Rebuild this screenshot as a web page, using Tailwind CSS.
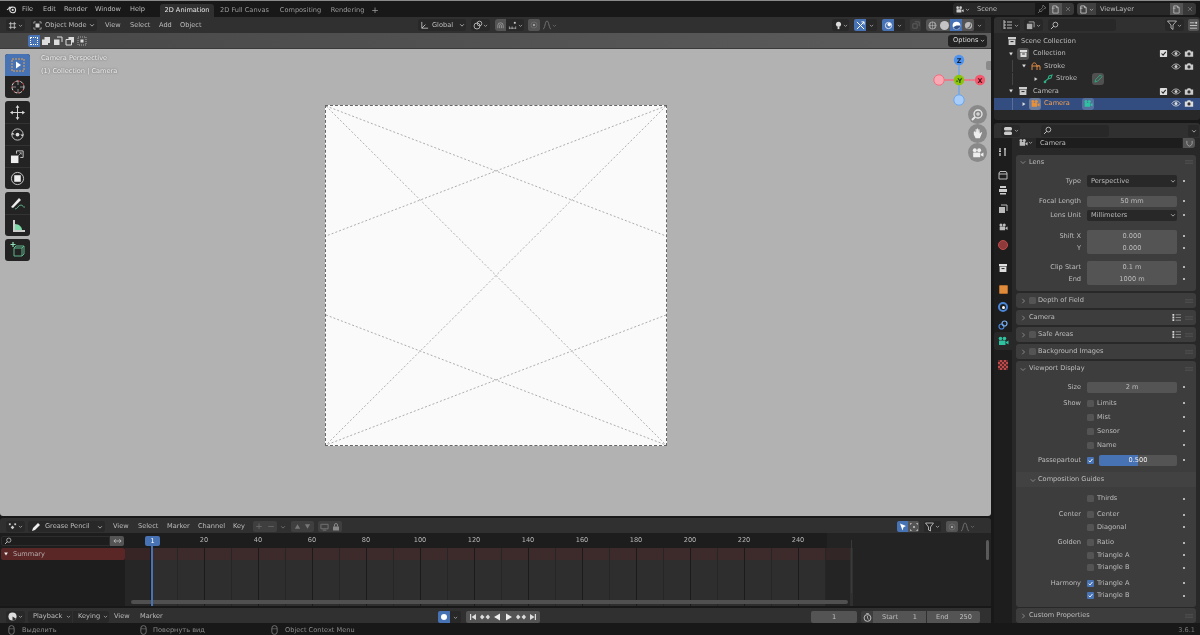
<!DOCTYPE html>
<html><head><meta charset="utf-8"><script src="https://cdn.jsdelivr.net/npm/@tailwindcss/browser@4"></script></head>
<body class="m-0 overflow-hidden bg-[#181818]">
<svg width="0" height="0" class="absolute">
<defs>
<symbol id="ch" viewBox="0 0 8 8"><path d="M1.5 3l2.5 2.5L6.5 3" fill="none" stroke="currentColor" stroke-width="1.1"/></symbol>
<symbol id="cr" viewBox="0 0 8 8"><path d="M3 1l3 3-3 3" fill="none" stroke="currentColor" stroke-width="0.9"/></symbol>
<symbol id="cd" viewBox="0 0 8 8"><path d="M1 3l3 3 3-3" fill="none" stroke="currentColor" stroke-width="0.9"/></symbol>
<symbol id="td" viewBox="0 0 8 8"><path d="M1.5 2h5L4 6z" fill="currentColor"/></symbol>
<symbol id="tr" viewBox="0 0 8 8"><path d="M2 1.5v5L6 4z" fill="currentColor"/></symbol>
<symbol id="eye" viewBox="0 0 12 10"><path d="M1 5c2.5-4 7.500-4 10 0-2.500 4-7.500 4-10 0z" fill="none" stroke="currentColor" stroke-width="1"/><circle cx="6" cy="5" r="1.800" fill="currentColor"/></symbol>
<symbol id="rcam" viewBox="0 0 12 10"><path d="M1 2.500h2.500l1-1.500h3l1 1.500H11V9H1z" fill="currentColor"/><circle cx="6" cy="5.500" r="1.900" fill="#333"/></symbol>
<symbol id="chk" viewBox="0 0 10 10"><rect x="1" y="1" width="8" height="8" rx="1" fill="currentColor"/><path d="M2.800 5l1.700 1.800 3-3.600" fill="none" stroke="#282828" stroke-width="1.200"/></symbol>
<symbol id="bchk" viewBox="0 0 10 10"><rect width="10" height="10" rx="1.500" fill="#4772b3"/><path d="M2.300 5.200l2 2 3.500-4.400" fill="none" stroke="#fff" stroke-width="1.300"/></symbol>
<symbol id="new" viewBox="0 0 10 10"><path d="M2 1h4l2 2v6H2zM4 3.500H1M6 1v2h2" fill="none" stroke="currentColor" stroke-width="0.900"/></symbol>
<symbol id="x" viewBox="0 0 10 10"><path d="M2.500 2.500l5 5M7.500 2.500l-5 5" stroke="currentColor" stroke-width="1"/></symbol>
<symbol id="sr" viewBox="0 0 12 12"><circle cx="7.200" cy="4.800" r="3.200" fill="none" stroke="currentColor" stroke-width="1.100"/><path d="M5 7l-3.500 3.500" stroke="currentColor" stroke-width="1.300"/></symbol>
<symbol id="box" viewBox="0 0 10 10"><path d="M1 1h8v2.200H1zM1.600 3.800h6.800V9H1.600z" fill="currentColor"/><rect x="3.500" y="5" width="3" height="1.100" fill="#333"/></symbol>
<symbol id="cam" viewBox="0 0 12 10"><circle cx="3.500" cy="2.500" r="1.800" fill="currentColor"/><circle cx="7.500" cy="2.500" r="1.800" fill="currentColor"/><rect x="2" y="4.500" width="6.500" height="4.500" rx="0.500" fill="currentColor"/><path d="M9 6l2.500-1.500v4L9 7z" fill="currentColor"/></symbol>
<symbol id="mouse" viewBox="0 0 8 12"><rect x="0.800" y="0.800" width="6.400" height="10.400" rx="3" fill="none" stroke="currentColor" stroke-width="0.900"/><path d="M1 4.500h6" stroke="currentColor" stroke-width="0.600"/></symbol>
<symbol id="list" viewBox="0 0 10 10"><path d="M.5 1h2v2h-2zM.5 4h2v2h-2zM.5 7h2v2h-2z" fill="#ddd"/><path d="M4 2h6M4 5h6M4 8h6" stroke="#aaa" stroke-width="0.800"/></symbol>
<symbol id="grip" viewBox="0 0 8 4"><path d="M0 .5h8M0 2h8M0 3.500h8" stroke="#555" stroke-width="0.600"/></symbol>
</defs></svg>
<div class="relative w-[1200px] h-[635px] overflow-hidden flex flex-col bg-[#181818] text-[#bdbdbd] text-[6.600px] leading-none font-['DejaVu_Sans',sans-serif] blur-[0.35px]">

<!-- top bar -->
<div class="h-[17px] flex items-end shrink-0 bg-[#181818] border-t border-[#8a8a8a]">
  <div class="flex items-center h-[16px] w-[160px]">
    <div class="w-[22px] flex justify-center"><svg class="w-[11px] h-[10px]" viewBox="0 0 12 11"><path d="M1 6.500L5 3.800 3 3.700h4" fill="none" stroke="#ddd" stroke-width="1.200"/><circle cx="7.300" cy="6.500" r="3.200" fill="none" stroke="#ddd" stroke-width="1.200"/><circle cx="7.300" cy="6.500" r="1.200" fill="#ddd"/></svg></div>
    <span class="w-[21px]">File</span><span class="w-[21px]">Edit</span><span class="w-[31px]">Render</span><span class="w-[35px]">Window</span><span class="w-[30px]">Help</span>
  </div>
  <div class="w-[54px] h-[13px] bg-[#303030] rounded-t-[3px] flex items-center justify-center text-[#e6e6e6]">2D Animation</div>
  <div class="w-[61px] h-[13px] flex items-center justify-center text-[#9a9a9a]">2D Full Canvas</div>
  <div class="w-[51px] h-[13px] flex items-center justify-center text-[#9a9a9a]">Compositing</div>
  <div class="w-[43px] h-[13px] flex items-center justify-center text-[#9a9a9a]">Rendering</div>
  <div class="w-[12px] h-[13px] flex items-center justify-center text-[#9a9a9a] text-[9px]">+</div>
  <div class="w-[693px] pl-[572px] h-[16px] flex items-center">
    <div class="w-[19px] h-[12px] rounded-l-[3px] bg-[#282828] flex items-center justify-center gap-[1px]"><svg class="w-[9px] h-[9px] text-[#ccc]"><use href="#cam"/></svg><svg class="w-[5px] h-[5px]"><use href="#ch"/></svg></div>
    <div class="w-[63px] h-[12px] bg-[#282828] flex items-center pl-[5px]">Scene</div>
    <svg class="ml-[2px] w-[10px] h-[10px] text-[#777]" viewBox="0 0 10 10"><path d="M6 1l3 3-2 .5-2 2L4 8 2 6l1.500-.5 2-2zM3 7L1 9" fill="none" stroke="currentColor" stroke-width="0.800"/></svg>
    <div class="ml-[2px] w-[13px] h-[12px] bg-[#545454] flex items-center justify-center"><svg class="w-[9px] h-[9px]"><use href="#new"/></svg></div>
    <div class="w-[12px] h-[12px] bg-[#383838] rounded-r-[3px] flex items-center justify-center text-[#777]"><svg class="w-[8px] h-[8px]"><use href="#x"/></svg></div>
  </div>
  <div class="h-[16px] flex items-center ml-[3px]">
    <div class="w-[19px] h-[12px] rounded-l-[3px] bg-[#404040] flex items-center justify-center gap-[1px]"><svg class="w-[9px] h-[9px] text-[#ccc]"><use href="#new"/></svg><svg class="w-[5px] h-[5px]"><use href="#ch"/></svg></div>
    <div class="w-[74px] h-[12px] bg-[#282828] flex items-center pl-[4px]">ViewLayer</div>
    <div class="w-[13px] h-[12px] bg-[#545454] flex items-center justify-center"><svg class="w-[9px] h-[9px]"><use href="#new"/></svg></div>
    <div class="w-[13px] h-[12px] bg-[#383838] rounded-r-[3px] flex items-center justify-center text-[#777]"><svg class="w-[8px] h-[8px]"><use href="#x"/></svg></div>
  </div>
</div>

<div class="flex-1 flex min-h-0">
<!-- left column -->
<div class="w-[991px] flex flex-col shrink-0">
  <!-- viewport header -->
  <div class="h-[16px] bg-[#303030] flex items-center shrink-0 relative">
    <div class="ml-[6px] w-[19px] h-[12px] bg-[#282828] rounded-[3px] flex items-center justify-center gap-[1px]"><svg class="w-[9px] h-[9px]" viewBox="0 0 10 10"><path d="M3 1v8M7 1v8M1 3h8M1 7h8" stroke="#ccc" stroke-width="0.900"/></svg><svg class="w-[5px] h-[5px]"><use href="#ch"/></svg></div>
    <div class="ml-[6px] w-[66px] h-[12px] bg-[#282828] rounded-[3px] flex items-center pl-[2px]"><svg class="w-[9px] h-[9px]" viewBox="0 0 10 10"><path d="M1 3V1h2M7 1h2v2M9 7v2H7M3 9H1V7" fill="none" stroke="#ccc" stroke-width="0.800"/><rect x="2.800" y="2.800" width="4.400" height="4.400" fill="#ccc"/></svg><span class="ml-[3px]">Object Mode</span><svg class="ml-auto mr-[2px] w-[6px] h-[6px]"><use href="#ch"/></svg></div>
    <span class="ml-[8px] w-[25px]">View</span><span class="w-[29px]">Select</span><span class="w-[21px]">Add</span><span>Object</span>
    <div class="absolute left-[418px] top-[2px] flex items-center h-[12px]">
      <div class="w-[48px] h-[12px] bg-[#282828] rounded-[3px] flex items-center pl-[2px]"><svg class="w-[9px] h-[9px]" viewBox="0 0 10 10"><path d="M2 1v7h7M2 8l4-4" fill="none" stroke="#ccc" stroke-width="0.900"/></svg><span class="ml-[3px]">Global</span><svg class="ml-auto mr-[1px] w-[6px] h-[6px]"><use href="#ch"/></svg></div>
      <div class="ml-[5px] w-[19px] h-[12px] bg-[#282828] rounded-[3px] flex items-center justify-center"><svg class="w-[10px] h-[10px]" viewBox="0 0 10 10"><circle cx="4" cy="6" r="3" fill="none" stroke="#ccc" stroke-width="0.800"/><circle cx="6.500" cy="3.500" r="2.300" fill="none" stroke="#ccc" stroke-width="0.800"/></svg><svg class="w-[5px] h-[5px]"><use href="#ch"/></svg></div>
      <div class="ml-[5px] w-[11px] h-[12px] bg-[#545454] rounded-l-[3px] flex items-center justify-center"><svg class="w-[9px] h-[9px]" viewBox="0 0 10 10"><path d="M2 8V5a3 3 0 016 0v3M4 8V5a1 1 0 012 0v3" fill="none" stroke="#aaa" stroke-width="0.800"/></svg></div>
      <div class="w-[18px] h-[12px] bg-[#282828] rounded-r-[3px] flex items-center justify-center"><svg class="w-[10px] h-[9px]" viewBox="0 0 10 10"><path d="M1 6v3M1 8h7M4 6v3M8 6v3" stroke="#ccc" stroke-width="0.700"/><rect x="6" y="1" width="2" height="2" fill="#ccc"/></svg><svg class="w-[5px] h-[5px]"><use href="#ch"/></svg></div>
      <div class="ml-[4px] w-[12px] h-[12px] bg-[#545454] rounded-[2px] flex items-center justify-center"><svg class="w-[8px] h-[8px]" viewBox="0 0 10 10"><circle cx="5" cy="5" r="3.800" fill="none" stroke="#777" stroke-width="0.800"/><circle cx="5" cy="5" r="1.200" fill="#bbb"/></svg></div>
      <div class="ml-[2px] w-[19px] flex items-center text-[#777]"><svg class="w-[10px] h-[10px]" viewBox="0 0 10 10"><path d="M1 9c2 0 2-8 4-8s2 8 4 8" fill="none" stroke="currentColor" stroke-width="0.900"/></svg><svg class="w-[5px] h-[5px]"><use href="#ch"/></svg></div>
    </div>
    <div class="absolute left-[832px] top-[2px] flex items-center h-[12px]">
      <div class="w-[17px] h-[12px] bg-[#282828] rounded-[3px] flex items-center justify-center"><svg class="w-[9px] h-[9px]" viewBox="0 0 10 10"><circle cx="5" cy="3.500" r="2.800" fill="#ddd"/><path d="M4 6h2v3H4z" fill="#ddd"/></svg><svg class="w-[5px] h-[5px]"><use href="#ch"/></svg></div>
      <div class="ml-[5px] w-[12px] h-[12px] bg-[#4772b3] rounded-l-[2px] flex items-center justify-center"><svg class="w-[9px] h-[9px]" viewBox="0 0 10 10"><path d="M1 1l8 8M1 9l8-8M6 1h3v3" fill="none" stroke="#fff" stroke-width="1.100"/></svg></div>
      <div class="w-[11px] h-[12px] bg-[#282828] rounded-r-[2px] flex items-center justify-center"><svg class="w-[5px] h-[5px]"><use href="#ch"/></svg></div>
      <div class="ml-[5px] w-[12px] h-[12px] bg-[#4772b3] rounded-l-[2px] flex items-center justify-center"><svg class="w-[9px] h-[9px]" viewBox="0 0 10 10"><circle cx="5" cy="5" r="3.500" fill="none" stroke="#fff" stroke-width="0.900"/><circle cx="5.800" cy="4" r="2" fill="#fff"/></svg></div>
      <div class="w-[11px] h-[12px] bg-[#282828] rounded-r-[2px] flex items-center justify-center"><svg class="w-[5px] h-[5px]"><use href="#ch"/></svg></div>
      <div class="ml-[5px] w-[11px] h-[12px] bg-[#3a3a3a] rounded-[2px] flex items-center justify-center"><svg class="w-[8px] h-[8px]" viewBox="0 0 10 10"><path d="M1 3.500h5.500V9H1zM3.500 1H9v5.500" fill="none" stroke="#666" stroke-width="1"/></svg></div>
      <div class="ml-[5px] w-[12px] h-[12px] bg-[#545454] rounded-l-[3px] flex items-center justify-center"><svg class="w-[9px] h-[9px]" viewBox="0 0 10 10"><circle cx="5" cy="5" r="4" fill="none" stroke="#ccc" stroke-width="0.700"/><path d="M1 5h8M5 1v8M3 2c-1 2-1 4 0 6M7 2c1 2 1 4 0 6" fill="none" stroke="#ccc" stroke-width="0.500"/></svg></div>
      <div class="w-[12px] h-[12px] bg-[#545454] flex items-center justify-center"><span class="w-[9px] h-[9px] rounded-full bg-[#c4c4c4]"></span></div>
      <div class="w-[12px] h-[12px] bg-[#4772b3] flex items-center justify-center"><svg class="w-[9px] h-[9px]" viewBox="0 0 10 10"><circle cx="5" cy="5" r="4.300" fill="#fff"/><path d="M5 5h4.300a4.300 4.300 0 01-8 2z" fill="#33528a"/></svg></div>
      <div class="w-[12px] h-[12px] bg-[#545454] rounded-r-[2px] flex items-center justify-center"><svg class="w-[9px] h-[9px]" viewBox="0 0 10 10"><circle cx="5" cy="5" r="4" fill="#bbb"/><path d="M7 1.800A4 4 0 012.500 8 5 5 0 007 1.800z" fill="#555"/></svg></div>
      <div class="w-[11px] h-[12px] bg-[#282828] rounded-r-[2px] flex items-center justify-center"><svg class="w-[5px] h-[5px]"><use href="#ch"/></svg></div>
    </div>
  </div>
  <!-- tool settings -->
  <div class="h-[16px] bg-[linear-gradient(90deg,#484848,#5c5c5c)] flex items-center shrink-0 border-b border-[#3a3a3a]">
    <div class="ml-[28px] flex h-[12px] bg-[#4a4a4a] rounded-[2px]">
      <div class="w-[12px] bg-[#4772b3] rounded-l-[2px] flex items-center justify-center"><span class="w-[8px] h-[8px] border border-dotted border-white"></span></div>
      <div class="w-[12px] flex items-center justify-center"><svg class="w-[10px] h-[10px]" viewBox="0 0 10 10"><path d="M1 3.500h6V9H1z M3.500 1H9v6H7V3.500H3.500z" fill="#ddd"/></svg></div>
      <div class="w-[12px] flex items-center justify-center"><svg class="w-[10px] h-[10px]" viewBox="0 0 10 10"><path d="M1 3.500h5.500V9H1z" fill="#ddd"/><path d="M4 1h5v5" fill="none" stroke="#ddd"/></svg></div>
      <div class="w-[12px] flex items-center justify-center"><svg class="w-[10px] h-[10px]" viewBox="0 0 10 10"><path d="M1 3.500h5.500V9H1z" fill="none" stroke="#ddd"/><path d="M3.500 1H9v5.500H6.500v-3h-3z" fill="#ddd"/></svg></div>
      <div class="w-[12px] flex items-center justify-center"><svg class="w-[10px] h-[10px]" viewBox="0 0 10 10"><rect x="1" y="1" width="8" height="8" fill="none" stroke="#aaa" stroke-dasharray="1 1"/><rect x="3.500" y="3.500" width="3" height="3" fill="#ddd"/></svg></div>
    </div>
    <div class="ml-auto mr-[4px] w-[39px] h-[12px] bg-[#232323] rounded-[3px] flex items-center justify-between pl-[5px] pr-[2px] text-[#ddd]">Options<svg class="w-[5px] h-[5px]"><use href="#ch"/></svg></div>
  </div>
  <!-- viewport -->
  <div class="relative flex-1 bg-[#b2b2b2] min-h-0 rounded-b-[3px]">
    <div class="ml-[325px] mt-[56px] w-[342px] h-[341px] bg-[#fafafa] border border-dashed border-[#666]">
      <svg class="w-full h-full" viewBox="0 0 340 339" fill="none" stroke="#999" stroke-width="0.800" stroke-dasharray="2 2"><path d="M0 0L340 339M340 0L0 339M0 0L340 130M340 0L0 130M0 209L340 339M340 209L0 339"/></svg>
    </div>
    <div class="absolute left-[41px] top-[6px] flex flex-col gap-[6px] text-[#eeeeee] [text-shadow:0_0_2px_#555]"><span>Camera Perspective</span><span>(1) Collection | Camera</span></div>
    <!-- toolbar -->
    <div class="absolute left-[5px] top-[5px] w-[25px] flex flex-col gap-[3px]">
      <div class="bg-[#232323] rounded-[3px] overflow-hidden">
        <div class="h-[22px] bg-[#4772b3] flex items-center justify-center"><svg class="w-[16px] h-[16px]" viewBox="0 0 16 16"><rect x="2" y="2" width="12" height="12" fill="none" stroke="#e9a34e" stroke-width="1" stroke-dasharray="2 1"/><path d="M6 4.500v7l5-3.500z" fill="#fff"/></svg></div>
        <div class="h-[22px] flex items-center justify-center"><svg class="w-[16px] h-[16px]" viewBox="0 0 16 16"><circle cx="8" cy="8" r="6" fill="none" stroke="#ddd" stroke-width="1" stroke-dasharray="3 2"/><circle cx="8" cy="8" r="6" fill="none" stroke="#d04040" stroke-width="1" stroke-dasharray="2 3" stroke-dashoffset="2.500"/><path d="M8 2v4M8 10v4M2 8h4M10 8h4" stroke="#bbb" stroke-width="0.700"/></svg></div>
      </div>
      <div class="bg-[#232323] rounded-[3px] overflow-hidden">
        <div class="h-[22px] flex items-center justify-center"><svg class="w-[15px] h-[15px]" viewBox="0 0 16 16"><path d="M8 1v14M1 8h14" stroke="#ddd"/><path d="M8 0l2 3H6zM8 16l-2-3h4zM0 8l3-2v4zM16 8l-3 2V6z" fill="#ddd"/></svg></div>
        <div class="h-[22px] flex items-center justify-center border-t border-[#333]"><svg class="w-[15px] h-[15px]" viewBox="0 0 16 16"><circle cx="8" cy="8" r="6" fill="none" stroke="#ccc"/><circle cx="8" cy="8" r="2" fill="#ddd"/><path d="M1 8l2-2 2 2zM15 8l-2 2-2-2z" fill="#ddd"/></svg></div>
        <div class="h-[22px] flex items-center justify-center border-t border-[#333]"><svg class="w-[15px] h-[15px]" viewBox="0 0 16 16"><rect x="1" y="7" width="8" height="8" fill="#eee"/><path d="M7 5V2h7v7h-3" fill="none" stroke="#ccc"/><path d="M9 7l3-3M12 4v2M12 4h-2" stroke="#ccc" stroke-width="0.700"/></svg></div>
        <div class="h-[22px] flex items-center justify-center border-t border-[#333]"><svg class="w-[15px] h-[15px]" viewBox="0 0 16 16"><circle cx="8" cy="8" r="6.500" fill="none" stroke="#ccc"/><rect x="4.500" y="4.500" width="7" height="7" fill="#eee"/></svg></div>
      </div>
      <div class="bg-[#232323] rounded-[3px] overflow-hidden">
        <div class="h-[22px] flex items-center justify-center"><svg class="w-[16px] h-[16px]" viewBox="0 0 16 16"><path d="M1 12L9 3l2 2-8 8z" fill="#eee"/><path d="M5 14c3 0 3-4 6-4s1 3 4 2" fill="none" stroke="#5fb58c" stroke-width="0.900"/></svg></div>
        <div class="h-[22px] flex items-center justify-center border-t border-[#333]"><svg class="w-[16px] h-[16px]" viewBox="0 0 16 16"><path d="M3 14V2l2 0v10h10v2z" fill="#ccc"/><path d="M5 12V6c4 0 7 3 7 6z" fill="#7fd8a8"/></svg></div>
      </div>
      <div class="bg-[#232323] rounded-[3px]">
        <div class="h-[22px] flex items-center justify-center"><svg class="w-[16px] h-[16px]" viewBox="0 0 16 16"><path d="M4 6h8v8H4zM4 6l2-2h8v8l-2 2M12 6l2-2" fill="none" stroke="#5fb58c"/><path d="M3 0v5M.5 2.500h5" stroke="#8fe0b4" stroke-width="1.200"/></svg></div>
      </div>
    </div>
    <!-- gizmo -->
    <svg class="absolute left-[930px] top-[1px] w-[60px] h-[60px]" viewBox="0 0 60 60">
      <path d="M29 10v40" stroke="#6ba6ee" stroke-width="1.400"/><path d="M9 30h41" stroke="#f56d80" stroke-width="1.400"/>
      <circle cx="29" cy="10" r="5.200" fill="#4f93ee"/><circle cx="50" cy="30" r="5.200" fill="#f4586e"/><circle cx="9" cy="30" r="5.200" fill="#f8a9b4" stroke="#f56d80"/><circle cx="29" cy="50" r="5.200" fill="#a8cdf8" stroke="#6ba6ee"/><circle cx="29" cy="30" r="5.200" fill="#8bc606"/>
      <text x="29" y="12.500" font-size="6.500" font-weight="bold" text-anchor="middle" fill="#123">Z</text><text x="50" y="32.500" font-size="6.500" font-weight="bold" text-anchor="middle" fill="#411">X</text><text x="29" y="32.500" font-size="6.500" font-weight="bold" text-anchor="middle" fill="#241">-Y</text>
    </svg>
    <div class="absolute left-[967px] top-[56px] flex flex-col">
      <div class="w-[20px] h-[19px] flex items-center justify-center"><span class="w-[19px] h-[19px] rounded-full bg-[#898989] flex items-center justify-center"><svg class="w-[14px] h-[14px]" viewBox="0 0 14 14"><circle cx="8" cy="6" r="4" fill="none" stroke="#e8e8e8" stroke-width="1.300"/><path d="M5 9l-3 3" stroke="#e8e8e8" stroke-width="1.800"/><path d="M8 4v4M6 6h4" stroke="#e8e8e8"/></svg></span></div>
      <div class="w-[20px] h-[19px] flex items-center justify-center"><span class="w-[19px] h-[19px] rounded-full bg-[#898989] flex items-center justify-center"><svg class="w-[13px] h-[13px]" viewBox="0 0 14 14"><path d="M3 8V5l1-.5L5 6V2.500l1-.5.500 4V1.500h1L8 6V2.500h1L9.500 7l2-1.500.500.500L9.500 12H5z" fill="#eee"/></svg></span></div>
      <div class="w-[20px] h-[19px] flex items-center justify-center"><span class="w-[19px] h-[19px] rounded-full bg-[#898989] flex items-center justify-center"><svg class="w-[13px] h-[12px] text-[#eee]"><use href="#cam"/></svg></span></div>
    </div>
    <div class="absolute right-0 top-[12px] w-[5px] h-[9px] bg-[#8a8a8a] rounded-l-[2px]"></div>
  </div>
  <!-- timeline header -->
  <div class="h-[2px] shrink-0"></div>
  <div class="h-[15px] shrink-0 bg-[#303030] pt-[2px] flex items-center relative rounded-t-[3px]">
    <div class="ml-[6px] w-[19px] h-[11px] bg-[#282828] rounded-[3px] flex items-center justify-center gap-[1px]"><svg class="w-[9px] h-[9px]" viewBox="0 0 10 10"><rect x="1" y="1.500" width="2" height="2" fill="#ccc"/><rect x="7" y="1.500" width="2" height="2" fill="#ccc"/><path d="M5 4l2 2-2 2-2-2z" fill="#ccc"/></svg><svg class="w-[5px] h-[5px]"><use href="#ch"/></svg></div>
    <div class="ml-[3px] w-[77px] h-[11px] bg-[#282828] rounded-[3px] flex items-center pl-[3px]"><svg class="w-[10px] h-[10px]" viewBox="0 0 10 10"><path d="M1 9l1-3 5-5 2 2-5 5z" fill="#eee"/></svg><span class="ml-[4px]">Grease Pencil</span><svg class="ml-auto mr-[2px] w-[6px] h-[6px]"><use href="#ch"/></svg></div>
    <span class="ml-[8px] w-[25px]">View</span><span class="w-[29px]">Select</span><span class="w-[31px]">Marker</span><span class="w-[35px]">Channel</span><span class="w-[20px]">Key</span>
    <div class="w-[24px] h-[11px] bg-[#3f3f3f] rounded-[2px] flex text-[#6e6e6e] text-[9px] items-center"><span class="w-[12px] text-center">+</span><span class="w-[12px] text-center">−</span></div>
    <svg class="ml-[3px] w-[6px] h-[6px] text-[#777]"><use href="#ch"/></svg>
    <div class="ml-[5px] w-[23px] h-[11px] bg-[#3f3f3f] rounded-[2px] flex items-center justify-around px-[2px]"><svg class="w-[7px] h-[7px]" viewBox="0 0 8 8"><path d="M4 1.500L7 6.500H1z" fill="#777"/></svg><svg class="w-[7px] h-[7px]" viewBox="0 0 8 8"><path d="M4 6.500L7 1.500H1z" fill="#777"/></svg></div>
    <div class="ml-[4px] w-[24px] h-[11px] bg-[#3f3f3f] rounded-[2px] flex items-center justify-around px-[1px]"><svg class="w-[9px] h-[8px]" viewBox="0 0 10 8"><path d="M1 1h8v5H1zM3 7.500h4" fill="none" stroke="#777"/></svg><svg class="w-[8px] h-[8px]" viewBox="0 0 8 8"><rect x="1" y="3.500" width="6" height="4" fill="#888"/><path d="M2.500 3.500V2a1.500 1.500 0 013 0v1.500" fill="none" stroke="#888"/></svg></div>
    <div class="absolute left-[897px] top-[3px] flex items-center h-[11px]">
      <div class="w-[11px] h-[11px] bg-[#4772b3] rounded-l-[2px] flex items-center justify-center"><svg class="w-[8px] h-[8px]" viewBox="0 0 8 8"><path d="M1 .5L7 3 4.500 4.300 3.500 7.500z" fill="#fff"/></svg></div>
      <div class="w-[11px] h-[11px] bg-[#545454] rounded-r-[2px] flex items-center justify-center"><svg class="w-[8px] h-[8px]" viewBox="0 0 8 8"><path d="M0 2V0h2M6 0h2v2M8 6v2H6M2 8H0V6" fill="none" stroke="#ccc"/><rect x="3" y="3" width="2" height="2" fill="#aaa"/></svg></div>
      <div class="ml-[5px] w-[17px] h-[11px] bg-[#282828] rounded-[2px] flex items-center"><svg class="w-[11px] h-[10px]" viewBox="0 0 10 10"><path d="M1 1h8L6 5v4L4 8V5z" fill="none" stroke="#ccc" stroke-width="0.800"/></svg><svg class="w-[5px] h-[5px]"><use href="#ch"/></svg></div>
      <div class="ml-[5px] w-[12px] h-[11px] bg-[#545454] rounded-[2px] flex items-center justify-center"><svg class="w-[8px] h-[8px]" viewBox="0 0 10 10"><circle cx="5" cy="5" r="3.800" fill="none" stroke="#777" stroke-width="0.800"/><circle cx="5" cy="5" r="1.200" fill="#bbb"/></svg></div>
      <div class="ml-[2px] flex items-center text-[#777]"><svg class="w-[10px] h-[10px]" viewBox="0 0 10 10"><path d="M1 9c2 0 2-8 4-8s2 8 4 8" fill="none" stroke="currentColor" stroke-width="0.900"/></svg><svg class="w-[5px] h-[5px]"><use href="#ch"/></svg></div>
    </div>
  </div>
  <!-- timeline -->
  <div class="h-[73px] shrink-0 flex bg-[#232323] relative overflow-hidden">
    <div class="w-[125px] shrink-0 flex flex-col bg-[#1d1d1d]">
      <div class="h-[15px] flex items-center">
        <div class="ml-[1px] w-[109px] h-[10px] bg-[#1d1d1d] border border-[#2d2d2d] rounded-l-[2px] flex items-center pl-[2px]"><svg class="w-[8px] h-[8px] text-[#ccc]"><use href="#sr"/></svg></div>
        <div class="w-[14px] h-[10px] bg-[#545454] rounded-r-[2px] flex items-center justify-center"><svg class="w-[9px] h-[6px]" viewBox="0 0 10 6"><path d="M1 3h8M3 1L1 3l2 2M7 1l2 2-2 2" fill="none" stroke="#ccc" stroke-width="0.800"/></svg></div>
      </div>
      <div class="h-[12px] bg-[#5a2626] rounded-[2px] ml-[1px] flex items-center pl-[2px]"><svg class="w-[6px] h-[6px] text-[#eee]"><use href="#td"/></svg><span class="ml-[4px] text-[#b8b0b0]">Summary</span></div>
    </div>
    <div class="flex-1 flex flex-col min-w-0">
      <div class="h-[15px] bg-[#1d1d1d] flex items-center pl-[52px] w-[702px] text-[#b8b8b8]">
        <span class="w-[54px] text-center shrink-0">20</span><span class="w-[54px] text-center shrink-0">40</span><span class="w-[54px] text-center shrink-0">60</span><span class="w-[54px] text-center shrink-0">80</span><span class="w-[54px] text-center shrink-0">100</span><span class="w-[54px] text-center shrink-0">120</span><span class="w-[54px] text-center shrink-0">140</span><span class="w-[54px] text-center shrink-0">160</span><span class="w-[54px] text-center shrink-0">180</span><span class="w-[54px] text-center shrink-0">200</span><span class="w-[54px] text-center shrink-0">220</span><span class="w-[54px] text-center shrink-0">240</span>
      </div>
      <div class="flex-1 flex">
        <div class="w-[28px] bg-[#262626]"></div><div class="w-[673px] bg-[#2e2e2e]"></div><div class="w-[24px] bg-[#242424]"></div><div class="w-[3px] bg-[#303030]"></div>
      </div>
    </div>
    <!-- overlays -->
    <div class="absolute left-[125px] top-[15px] w-[702px] h-[12px] bg-[#5a2626]/35"></div>
    <div class="absolute left-[827px] top-[15px] w-[23px] h-[12px] bg-[#3a2828]/70"></div>
    <div class="absolute left-[177px] top-[15px] w-[649px] bottom-0 bg-[repeating-linear-gradient(90deg,#262626_0,#262626_1px,transparent_1px,transparent_54px)]"></div>
    <div class="absolute left-[150px] top-[15px] w-[676px] bottom-0 bg-[repeating-linear-gradient(90deg,#1b1b1b_0,#1b1b1b_1px,transparent_1px,transparent_54px)]"></div>
    <div class="absolute left-[131px] top-[67px] w-[717px] h-[4px] rounded-full bg-[#505050]"></div>
    <div class="absolute left-[151px] top-[3px] w-[2px] bottom-0 bg-[#4772b3]"></div>
    <div class="absolute left-[145px] top-[3px] w-[15px] h-[10px] rounded-[2px] bg-[#4772b3] text-white flex items-center justify-center">1</div>
    <div class="absolute left-[851px] top-[7px] bottom-[13px] w-[1px] bg-[#3a3a3a]"></div>
    <div class="absolute left-[986px] top-[7px] h-[20px] w-[3px] rounded-full bg-[#5a5a5a]"></div>
  </div>
  <!-- playback -->
  <div class="h-[2px] shrink-0"></div>
  <div class="h-[15px] shrink-0 bg-[#303030] pt-[2px] flex items-center relative">
    <div class="ml-[6px] w-[19px] h-[12px] bg-[#282828] rounded-[3px] flex items-center justify-center gap-[1px]"><svg class="w-[9px] h-[9px]" viewBox="0 0 10 10"><circle cx="5" cy="5" r="4.500" fill="#ddd"/><path d="M5 5l4 2.500A4.500 4.500 0 015 9.500z" fill="#333"/></svg><svg class="w-[5px] h-[5px]"><use href="#ch"/></svg></div>
    <div class="ml-[3px] w-[44px] h-[12px] bg-[#282828] rounded-l-[3px] flex items-center pl-[5px]">Playback<svg class="ml-auto mr-[1px] w-[5px] h-[5px]"><use href="#ch"/></svg></div>
    <div class="ml-[1px] w-[36px] h-[12px] bg-[#282828] rounded-r-[3px] flex items-center pl-[5px]">Keying<svg class="ml-auto mr-[1px] w-[5px] h-[5px]"><use href="#ch"/></svg></div>
    <span class="ml-[5px] w-[26px]">View</span><span>Marker</span>
    <div class="absolute left-[438px] top-[3px] flex items-center h-[12px]">
      <div class="w-[12px] h-[12px] bg-[#4772b3] rounded-l-[2px] flex items-center justify-center"><span class="w-[6px] h-[6px] rounded-full bg-white"></span></div>
      <div class="w-[11px] h-[12px] bg-[#282828] rounded-r-[2px] flex items-center justify-center"><svg class="w-[5px] h-[5px]"><use href="#ch"/></svg></div>
      <div class="ml-[5px] w-[74px] h-[12px] bg-[#545454] rounded-[2px] flex items-center justify-around px-[1px]">
        <svg class="w-[8px] h-[8px]" viewBox="0 0 8 8"><path d="M1 1h1.200v6H1zM7 1v6L2.500 4z" fill="#ddd"/></svg>
        <svg class="w-[10px] h-[8px]" viewBox="0 0 10 8"><path d="M2 1.500L4.500 4 2 6.500 0 4zM8 1.500L10 4 8 6.500 5.500 4z" fill="#ddd"/></svg>
        <svg class="w-[8px] h-[8px]" viewBox="0 0 8 8"><path d="M7 .5v7L1 4z" fill="#eee"/></svg>
        <svg class="w-[8px] h-[8px]" viewBox="0 0 8 8"><path d="M1 .5v7L7 4z" fill="#eee"/></svg>
        <svg class="w-[10px] h-[8px]" viewBox="0 0 10 8"><path d="M2 1.500L4.500 4 2 6.500 0 4zM8 1.500L10 4 8 6.500 5.500 4z" fill="#ddd"/></svg>
        <svg class="w-[8px] h-[8px]" viewBox="0 0 8 8"><path d="M7 1H5.800v6H7zM1 1v6l4.500-3z" fill="#ddd"/></svg>
      </div>
    </div>
    <div class="absolute left-[811px] top-[3px] flex items-center h-[12px]">
      <div class="w-[46px] h-[12px] bg-[#545454] rounded-[2px] flex items-center justify-center">1</div>
      <div class="ml-[4px] w-[12px] h-[12px] bg-[#3d3d3d] rounded-l-[2px] flex items-center justify-center"><svg class="w-[9px] h-[9px]" viewBox="0 0 10 10"><circle cx="5" cy="5.500" r="3.800" fill="none" stroke="#ccc"/><path d="M5 3v3l1.500 1M3.500 .5h3" fill="none" stroke="#ccc" stroke-width="0.800"/></svg></div>
      <div class="w-[53px] h-[12px] bg-[#545454] flex items-center justify-between px-[9px]"><span>Start</span><span>1</span></div>
      <div class="ml-[1px] w-[53px] h-[12px] bg-[#545454] rounded-r-[2px] flex items-center justify-between pl-[9px] pr-[8px]"><span>End</span><span>250</span></div>
    </div>
  </div>
</div>

<!-- right column -->
<div class="w-[209px] pl-[3px] flex flex-col shrink-0 bg-[#181818]">
  <!-- outliner -->
  <div class="h-[16px] bg-[#303030] flex items-center shrink-0 rounded-t-[3px]">
    <div class="ml-[7px] w-[19px] h-[12px] bg-[#282828] rounded-[3px] flex items-center justify-center gap-[1px]"><svg class="w-[10px] h-[10px]" viewBox="0 0 10 10"><path d="M1 0v9M1 2h2M1 5h2M1 8h2M4 2h5M4 5h5M4 8h5" stroke="#ccc" stroke-width="0.900"/></svg><svg class="w-[5px] h-[5px]"><use href="#ch"/></svg></div>
    <div class="ml-[4px] w-[19px] h-[12px] bg-[#282828] rounded-[3px] flex items-center justify-center gap-[1px]"><svg class="w-[9px] h-[9px]" viewBox="0 0 10 10"><path d="M1 3h6v6H1z" fill="#aaa"/><path d="M3 1h6v6" fill="none" stroke="#aaa"/></svg><svg class="w-[5px] h-[5px]"><use href="#ch"/></svg></div>
    <div class="ml-[5px] w-[68px] h-[12px] bg-[#282828] rounded-[3px] flex items-center pl-[2px]"><svg class="w-[9px] h-[9px] text-[#ccc]"><use href="#sr"/></svg></div>
    <div class="ml-auto w-[19px] h-[12px] bg-[#282828] rounded-[3px] flex items-center justify-center"><svg class="w-[10px] h-[10px]" viewBox="0 0 10 10"><path d="M.500 1h9L6 5v4.500L4 8V5z" fill="none" stroke="#ccc" stroke-width="0.800"/></svg><svg class="w-[5px] h-[5px]"><use href="#ch"/></svg></div>
    <div class="ml-[4px] mr-[1px] w-[11px] h-[12px] bg-[#545454] rounded-[2px] flex items-center justify-center"><svg class="w-[9px] h-[9px]" viewBox="0 0 10 10"><path d="M1 2h5M1 5h8M1 8h8" stroke="#ccc"/><circle cx="8" cy="2" r="1.200" fill="#ccc"/></svg></div>
  </div>
  <div class="h-[87px] bg-[#282828] shrink-0 pt-[2px] rounded-b-[3px]">
    <div class="h-[12.500px] flex items-center"><svg class="ml-[13px] w-[10px] h-[10px] text-[#ccc]"><use href="#box"/></svg><span class="ml-[4px]">Scene Collection</span></div>
    <div class="h-[12.500px] flex items-center"><svg class="ml-[14px] w-[6px] h-[6px] text-[#ddd]"><use href="#td"/></svg><span class="ml-[3px] w-[12px] h-[12px] rounded-[3px] bg-[#505050] flex items-center justify-center"><svg class="w-[9px] h-[9px] text-[#ddd]"><use href="#box"/></svg></span><span class="ml-[4px]">Collection</span><span class="ml-auto flex items-center gap-[3px] mr-[6px]"><svg class="w-[9px] h-[9px] text-[#ddd]"><use href="#chk"/></svg><svg class="w-[10px] h-[9px] text-[#ccc]"><use href="#eye"/></svg><svg class="w-[10px] h-[9px] text-[#ccc]"><use href="#rcam"/></svg></span></div>
    <div class="h-[12.500px] flex items-center"><span class="ml-[18px] w-[1px] h-[12px] bg-[#444]"></span><svg class="ml-[8px] w-[6px] h-[6px] text-[#ddd]"><use href="#td"/></svg><svg class="ml-[4px] w-[10px] h-[10px]" viewBox="0 0 10 10"><path d="M1 9V4M1 4c1-3 4-3 5 1v4M6 6c0-2 3-2 3 0v3M1 5h8" fill="none" stroke="#d98945" stroke-width="1"/></svg><span class="ml-[3px]">Stroke</span><span class="ml-auto flex items-center gap-[3px] mr-[6px]"><svg class="w-[10px] h-[9px] text-[#ccc]"><use href="#eye"/></svg><svg class="w-[10px] h-[9px] text-[#ccc]"><use href="#rcam"/></svg></span></div>
    <div class="h-[12.500px] flex items-center"><span class="ml-[18px] w-[1px] h-[12px] bg-[#444]"></span><svg class="ml-[20px] w-[6px] h-[6px] text-[#ccc]"><use href="#tr"/></svg><svg class="ml-[4px] w-[10px] h-[10px]" viewBox="0 0 10 10"><path d="M1 8l4-3 1-3 3-1-1 3-3 1" fill="none" stroke="#2fae82" stroke-width="1.100"/><circle cx="2" cy="8" r="1.300" fill="#2fae82"/></svg><span class="ml-[3px]">Stroke</span><span class="ml-[15px] w-[12px] h-[12px] rounded-[3px] bg-[#505050] flex items-center justify-center"><svg class="w-[9px] h-[9px]" viewBox="0 0 10 10"><path d="M1 9l1-3 5-5 2 2-5 5z" fill="none" stroke="#2fae82" stroke-width="1"/></svg></span></div>
    <div class="h-[12.500px] flex items-center"><svg class="ml-[14px] w-[6px] h-[6px] text-[#ddd]"><use href="#td"/></svg><svg class="ml-[4px] w-[10px] h-[10px] text-[#ccc]"><use href="#box"/></svg><span class="ml-[5px]">Camera</span><span class="ml-auto flex items-center gap-[3px] mr-[6px]"><svg class="w-[9px] h-[9px] text-[#ddd]"><use href="#chk"/></svg><svg class="w-[10px] h-[9px] text-[#ccc]"><use href="#eye"/></svg><svg class="w-[10px] h-[9px] text-[#ccc]"><use href="#rcam"/></svg></span></div>
    <div class="h-[12.500px] flex items-center bg-[#334d80]"><span class="ml-[18px] w-[1px] h-[12px] bg-[#56709e]"></span><svg class="ml-[8px] w-[6px] h-[6px] text-[#ddd]"><use href="#tr"/></svg><span class="ml-[2px] w-[12px] h-[12px] rounded-[3px] bg-[#6a7b9c] flex items-center justify-center"><svg class="w-[10px] h-[9px] text-[#e8913a]"><use href="#cam"/></svg></span><span class="ml-[3px] text-[#f0a050]">Camera</span><span class="ml-[12px] w-[12px] h-[12px] rounded-[3px] bg-[#56709e] flex items-center justify-center"><svg class="w-[10px] h-[9px] text-[#2fc2a0]"><use href="#cam"/></svg></span><span class="ml-auto flex items-center gap-[3px] mr-[6px]"><svg class="w-[10px] h-[9px] text-[#ddd]"><use href="#eye"/></svg><svg class="w-[10px] h-[9px] text-[#ddd]"><use href="#rcam"/></svg></span></div>
  </div>
  <div class="h-[3px] shrink-0"></div>
  <!-- properties header -->
  <div class="h-[15px] bg-[#303030] flex items-center shrink-0 rounded-t-[3px]">
    <div class="ml-[7px] w-[19px] h-[12px] bg-[#282828] rounded-[3px] flex items-center justify-center gap-[1px]"><svg class="w-[10px] h-[10px]" viewBox="0 0 10 10"><rect x="1" y="1" width="8" height="3.500" rx="1.500" fill="#ccc"/><rect x="1" y="5.500" width="8" height="3.500" rx="1.500" fill="#ccc"/></svg><svg class="w-[5px] h-[5px]"><use href="#ch"/></svg></div>
    <div class="ml-[21px] w-[68px] h-[12px] bg-[#282828] rounded-[3px] flex items-center pl-[2px]"><svg class="w-[9px] h-[9px] text-[#ccc]"><use href="#sr"/></svg></div>
    <div class="ml-auto mr-[1px] w-[11px] h-[12px] bg-[#282828] rounded-[2px] flex items-center justify-center"><svg class="w-[6px] h-[6px]"><use href="#ch"/></svg></div>
  </div>
  <div class="flex-1 flex min-h-0">
    <!-- tabs -->
    <div class="w-[18px] shrink-0 bg-[#1d1d1d] flex flex-col items-center relative">
      <svg class="absolute top-[9px] w-[10px] h-[10px] text-[#ccc]" viewBox="0 0 10 10"><path d="M2 1v3M2 6v3M7 1v8" stroke="currentColor" stroke-width="1.300"/><path d="M1 4.500h2M6 2h2" stroke="currentColor"/></svg>
      <svg class="absolute top-[32px] w-[10px] h-[10px] text-[#ccc]" viewBox="0 0 10 10"><path d="M1 3l1-1.500h6L9 3v6H1z M1 4h8" fill="none" stroke="currentColor" stroke-width="0.900"/></svg>
      <svg class="absolute top-[47px] w-[10px] h-[10px] text-[#ccc]" viewBox="0 0 10 10"><path d="M2 1h6v2H2zM1 4h8v3H1zM2 8h6v1.500H2z" fill="currentColor"/></svg>
      <svg class="absolute top-[66px] w-[10px] h-[10px] text-[#bbb]" viewBox="0 0 10 10"><path d="M1 3h6v6H1z" fill="currentColor"/><path d="M3 1h6v6" fill="none" stroke="currentColor"/></svg>
      <svg class="absolute top-[84px] w-[10px] h-[10px] text-[#bbb]"><use href="#cam"/></svg>
      <span class="absolute top-[102px] w-[10px] h-[10px] rounded-full bg-[#8f3a3a] border border-[#c04a4a]"></span>
      <svg class="absolute top-[125px] w-[10px] h-[10px] text-[#ddd]"><use href="#box"/></svg>
      <span class="absolute top-[147px] w-[9px] h-[9px] bg-[#e08a3c] border border-[#b06a2a] rounded-[1px]"></span>
      <span class="absolute top-[164px] w-[10px] h-[10px] rounded-full border-2 border-[#4a86d8] flex items-center justify-center"><span class="w-[3px] h-[3px] rounded-full bg-white"></span></span>
      <svg class="absolute top-[182px] w-[10px] h-[10px]" viewBox="0 0 10 10"><circle cx="3.500" cy="6.500" r="2.500" fill="none" stroke="#4a86d8" stroke-width="1.200"/><circle cx="6.500" cy="3.500" r="2.500" fill="none" stroke="#7ab0ee" stroke-width="1.200"/></svg>
      <div class="absolute top-[194px] left-0 w-[18px] h-[18px] bg-[#282828] rounded-l-[3px] flex items-center justify-center"><svg class="w-[12px] h-[10px] text-[#2fc2a0]"><use href="#cam"/></svg></div>
      <span class="absolute top-[222px] w-[10px] h-[10px] bg-[repeating-conic-gradient(#c04a4a_0_25%,#5a2a2a_0_50%)] bg-[length:4px_4px]"></span>
    </div>
    <!-- panels -->
    <div class="flex-1 bg-[#282828] pl-[4px] min-w-0 flex flex-col text-[#bdbdbd]">
      <div class="h-[17px] flex items-start shrink-0">
        <span class="w-[18px] flex items-center"><svg class="ml-[2px] w-[10px] h-[9px] text-[#bbb]"><use href="#cam"/></svg><svg class="w-[5px] h-[5px]"><use href="#ch"/></svg></span>
        <div class="ml-[2px] w-[146px] h-[10px] bg-[#1d1d1d] flex items-center pl-[4px]">Camera</div>
        <div class="ml-[1px] w-[12px] h-[10px] bg-[#545454] rounded-r-[3px] flex items-center justify-center"><svg class="w-[7px] h-[7px]" viewBox="0 0 8 8"><path d="M1 1v3c0 2 3 3 3 3s3-1 3-3V1" fill="none" stroke="#aaa"/></svg></div>
      </div>
      <!-- Lens -->
      <div class="w-[180px] h-[136px] shrink-0 bg-[#3d3d3d] rounded-[3px]">
        <div class="h-[14px] flex items-center pl-[4px]"><svg class="w-[6px] h-[6px] text-[#aaa]"><use href="#cd"/></svg><span class="ml-[3px]">Lens</span><svg class="ml-auto mr-[3px] w-[8px] h-[4px]"><use href="#grip"/></svg></div>
        <div class="h-[12px] mt-[6px] flex items-center"><span class="w-[65px] text-right">Type</span><div class="ml-[6px] w-[90px] h-[12px] bg-[#282828] rounded-[2px] flex items-center pl-[4px]">Perspective<svg class="ml-auto mr-[1px] w-[6px] h-[6px]"><use href="#ch"/></svg></div><span class="ml-[6px] w-[2px] h-[2px] rounded-full bg-[#ddd]"></span></div>
        <div class="h-[12px] mt-[8px] flex items-center"><span class="w-[65px] text-right">Focal Length</span><div class="ml-[6px] w-[90px] h-[11px] bg-[#545454] rounded-[2px] flex items-center justify-center">50 mm</div><span class="ml-[6px] w-[2px] h-[2px] rounded-full bg-[#ddd]"></span></div>
        <div class="h-[12px] mt-[2px] flex items-center"><span class="w-[65px] text-right">Lens Unit</span><div class="ml-[6px] w-[90px] h-[11px] bg-[#282828] rounded-[2px] flex items-center pl-[4px]">Millimeters<svg class="ml-auto mr-[1px] w-[6px] h-[6px]"><use href="#ch"/></svg></div><span class="ml-[6px] w-[2px] h-[2px] rounded-full bg-[#ddd]"></span></div>
        <div class="h-[12px] mt-[9px] flex items-center"><span class="w-[65px] text-right">Shift X</span><div class="ml-[6px] w-[90px] h-[11.500px] bg-[#545454] rounded-t-[2px] flex items-center justify-center">0.000</div><span class="ml-[6px] w-[2px] h-[2px] rounded-full bg-[#ddd]"></span></div>
        <div class="h-[12px] flex items-center"><span class="w-[65px] text-right">Y</span><div class="ml-[6px] w-[90px] h-[11.500px] bg-[#545454] rounded-b-[2px] flex items-center justify-center">0.000</div><span class="ml-[6px] w-[2px] h-[2px] rounded-full bg-[#ddd]"></span></div>
        <div class="h-[12px] mt-[7px] flex items-center"><span class="w-[65px] text-right">Clip Start</span><div class="ml-[6px] w-[90px] h-[11.500px] bg-[#545454] rounded-t-[2px] flex items-center justify-center">0.1 m</div><span class="ml-[6px] w-[2px] h-[2px] rounded-full bg-[#ddd]"></span></div>
        <div class="h-[12px] flex items-center"><span class="w-[65px] text-right">End</span><div class="ml-[6px] w-[90px] h-[11.500px] bg-[#545454] rounded-b-[2px] flex items-center justify-center">1000 m</div><span class="ml-[6px] w-[2px] h-[2px] rounded-full bg-[#ddd]"></span></div>
      </div>
      <!-- closed panels -->
      <div class="mt-[2px] w-[180px] h-[15px] shrink-0 bg-[#3d3d3d] rounded-[3px] flex items-center pl-[4px]"><svg class="w-[6px] h-[6px] text-[#aaa]"><use href="#cr"/></svg><span class="ml-[3px] w-[7px] h-[7px] rounded-[1.500px] bg-[#545454]"></span><span class="ml-[2px]">Depth of Field</span><svg class="ml-auto mr-[3px] w-[8px] h-[4px]"><use href="#grip"/></svg></div>
      <div class="mt-[2px] w-[180px] h-[15px] shrink-0 bg-[#3d3d3d] rounded-[3px] flex items-center pl-[4px]"><svg class="w-[6px] h-[6px] text-[#aaa]"><use href="#cr"/></svg><span class="ml-[3px]">Camera</span><svg class="ml-auto w-[9px] h-[9px]"><use href="#list"/></svg><svg class="ml-[4px] mr-[3px] w-[8px] h-[4px]"><use href="#grip"/></svg></div>
      <div class="mt-[2px] w-[180px] h-[15px] shrink-0 bg-[#3d3d3d] rounded-[3px] flex items-center pl-[4px]"><svg class="w-[6px] h-[6px] text-[#aaa]"><use href="#cr"/></svg><span class="ml-[3px] w-[7px] h-[7px] rounded-[1.500px] bg-[#545454]"></span><span class="ml-[2px]">Safe Areas</span><svg class="ml-auto w-[9px] h-[9px]"><use href="#list"/></svg><svg class="ml-[4px] mr-[3px] w-[8px] h-[4px]"><use href="#grip"/></svg></div>
      <div class="mt-[2px] w-[180px] h-[15px] shrink-0 bg-[#3d3d3d] rounded-[3px] flex items-center pl-[4px]"><svg class="w-[6px] h-[6px] text-[#aaa]"><use href="#cr"/></svg><span class="ml-[3px] w-[7px] h-[7px] rounded-[1.500px] bg-[#545454]"></span><span class="ml-[2px]">Background Images</span><svg class="ml-auto mr-[3px] w-[8px] h-[4px]"><use href="#grip"/></svg></div>
      <!-- Viewport display -->
      <div class="mt-[2px] w-[180px] h-[246px] shrink-0 bg-[#3d3d3d] rounded-[3px]">
        <div class="h-[15px] flex items-center pl-[4px]"><svg class="w-[6px] h-[6px] text-[#aaa]"><use href="#cd"/></svg><span class="ml-[3px]">Viewport Display</span><svg class="ml-auto mr-[3px] w-[8px] h-[4px]"><use href="#grip"/></svg></div>
        <div class="h-[12px] mt-[5px] flex items-center"><span class="w-[65px] text-right">Size</span><div class="ml-[6px] w-[90px] h-[11px] bg-[#545454] rounded-[2px] flex items-center justify-center">2 m</div><span class="ml-[6px] w-[2px] h-[2px] rounded-full bg-[#ddd]"></span></div>
        <div class="h-[14px] mt-[3px] flex items-center"><span class="w-[65px] text-right">Show</span><span class="ml-[6px] w-[7px] h-[7px] rounded-[1.500px] bg-[#545454]"></span><span class="ml-[3px] w-[80px]">Limits</span><span class="ml-[6px] w-[2px] h-[2px] rounded-full bg-[#ddd]"></span></div>
        <div class="h-[14px] flex items-center"><span class="w-[65px]"></span><span class="ml-[6px] w-[7px] h-[7px] rounded-[1.500px] bg-[#545454]"></span><span class="ml-[3px] w-[80px]">Mist</span><span class="ml-[6px] w-[2px] h-[2px] rounded-full bg-[#ddd]"></span></div>
        <div class="h-[14px] flex items-center"><span class="w-[65px]"></span><span class="ml-[6px] w-[7px] h-[7px] rounded-[1.500px] bg-[#545454]"></span><span class="ml-[3px] w-[80px]">Sensor</span><span class="ml-[6px] w-[2px] h-[2px] rounded-full bg-[#ddd]"></span></div>
        <div class="h-[14px] flex items-center"><span class="w-[65px]"></span><span class="ml-[6px] w-[7px] h-[7px] rounded-[1.500px] bg-[#545454]"></span><span class="ml-[3px] w-[80px]">Name</span><span class="ml-[6px] w-[2px] h-[2px] rounded-full bg-[#ddd]"></span></div>
        <div class="h-[14px] mt-[1px] flex items-center"><span class="w-[65px] text-right">Passepartout</span><svg class="ml-[6px] w-[7px] h-[7px]"><use href="#bchk"/></svg><div class="ml-[5px] w-[78px] h-[11px] rounded-[2px] bg-[linear-gradient(90deg,#4772b3_50%,#545454_50%)] flex items-center justify-center text-[#eee]">0.500</div><span class="ml-[6px] w-[2px] h-[2px] rounded-full bg-[#ddd]"></span></div>
        <div class="h-[15px] mt-[5px] bg-[#424242] flex items-center pl-[14px]"><svg class="w-[6px] h-[6px] text-[#aaa]"><use href="#cd"/></svg><span class="ml-[2px]">Composition Guides</span></div>
        <div class="h-[13px] mt-[5px] flex items-center"><span class="w-[65px]"></span><span class="ml-[6px] w-[7px] h-[7px] rounded-[1.500px] bg-[#545454]"></span><span class="ml-[3px] w-[80px]">Thirds</span><span class="ml-[6px] w-[2px] h-[2px] rounded-full bg-[#ddd]"></span></div>
        <div class="h-[13px] mt-[3px] flex items-center"><span class="w-[65px] text-right">Center</span><span class="ml-[6px] w-[7px] h-[7px] rounded-[1.500px] bg-[#545454]"></span><span class="ml-[3px] w-[80px]">Center</span><span class="ml-[6px] w-[2px] h-[2px] rounded-full bg-[#ddd]"></span></div>
        <div class="h-[12.500px] flex items-center"><span class="w-[65px]"></span><span class="ml-[6px] w-[7px] h-[7px] rounded-[1.500px] bg-[#545454]"></span><span class="ml-[3px] w-[80px]">Diagonal</span><span class="ml-[6px] w-[2px] h-[2px] rounded-full bg-[#ddd]"></span></div>
        <div class="h-[12.500px] mt-[3px] flex items-center"><span class="w-[65px] text-right">Golden</span><span class="ml-[6px] w-[7px] h-[7px] rounded-[1.500px] bg-[#545454]"></span><span class="ml-[3px] w-[80px]">Ratio</span><span class="ml-[6px] w-[2px] h-[2px] rounded-full bg-[#ddd]"></span></div>
        <div class="h-[12.500px] flex items-center"><span class="w-[65px]"></span><span class="ml-[6px] w-[7px] h-[7px] rounded-[1.500px] bg-[#545454]"></span><span class="ml-[3px] w-[80px]">Triangle A</span><span class="ml-[6px] w-[2px] h-[2px] rounded-full bg-[#ddd]"></span></div>
        <div class="h-[12.500px] flex items-center"><span class="w-[65px]"></span><span class="ml-[6px] w-[7px] h-[7px] rounded-[1.500px] bg-[#545454]"></span><span class="ml-[3px] w-[80px]">Triangle B</span><span class="ml-[6px] w-[2px] h-[2px] rounded-full bg-[#ddd]"></span></div>
        <div class="h-[12.500px] mt-[3px] flex items-center"><span class="w-[65px] text-right">Harmony</span><svg class="ml-[6px] w-[7px] h-[7px]"><use href="#bchk"/></svg><span class="ml-[3px] w-[80px]">Triangle A</span><span class="ml-[6px] w-[2px] h-[2px] rounded-full bg-[#ddd]"></span></div>
        <div class="h-[12.500px] flex items-center"><span class="w-[65px]"></span><svg class="ml-[6px] w-[7px] h-[7px]"><use href="#bchk"/></svg><span class="ml-[3px] w-[80px]">Triangle B</span><span class="ml-[6px] w-[2px] h-[2px] rounded-full bg-[#ddd]"></span></div>
      </div>
      <div class="mt-[1px] w-[180px] h-[15px] shrink-0 bg-[#3d3d3d] rounded-[3px] flex items-center pl-[4px]"><svg class="w-[6px] h-[6px] text-[#aaa]"><use href="#cr"/></svg><span class="ml-[3px]">Custom Properties</span><svg class="ml-auto mr-[3px] w-[8px] h-[4px]"><use href="#grip"/></svg></div>
    </div>
  </div>
</div>
</div>

<!-- status -->
<div class="h-[12px] shrink-0 bg-[#181818] pt-[2px] flex items-center text-[#8c8c8c]">
  <svg class="ml-[8px] w-[7px] h-[10px] shrink-0"><use href="#mouse"/></svg><span class="ml-[7px] w-[117px] shrink-0">Выделить</span>
  <svg class="ml-[1px] w-[7px] h-[10px] shrink-0"><use href="#mouse"/></svg><span class="ml-[6px] w-[117px] shrink-0">Повернуть вид</span>
  <svg class="ml-[1px] w-[7px] h-[10px] shrink-0"><use href="#mouse"/></svg><span class="ml-[7px]">Object Context Menu</span>
  <span class="ml-auto mr-[5px] text-[#7a7a7a]">3.6.1</span>
</div>
</div>
</body></html>
